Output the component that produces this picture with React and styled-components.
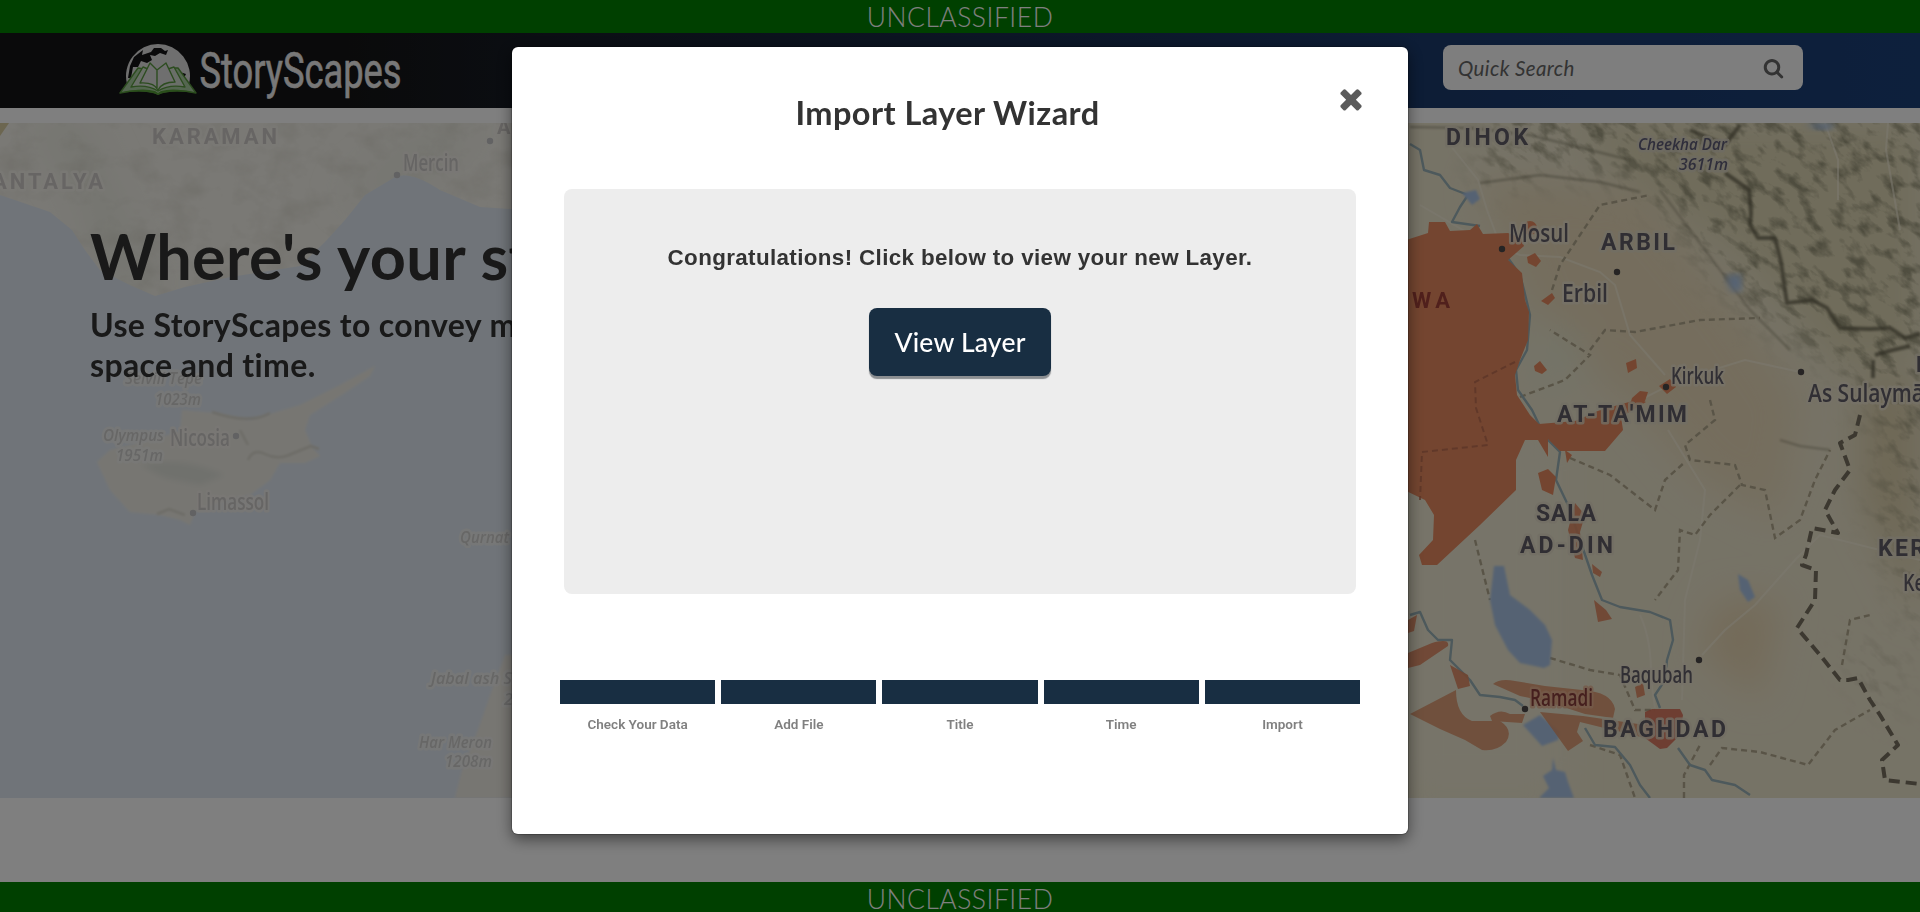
import React from "react";
import styled, { createGlobalStyle } from "styled-components";

const GlobalStyle = createGlobalStyle`
  * { box-sizing: border-box; }
  body { margin: 0; background: #fff; font-family: Lato, sans-serif; color: #333; }
  h1, h2, h3, p, ol { margin: 0; padding: 0; }
`;

const Page = styled.div`
  display: flex;
  flex-direction: column;
  height: 912px;
  overflow: hidden;
`;

const Banner = styled.div`
  flex: none;
  height: ${(p) => p.$height}px;
  background: #008000;
  color: #fff;
  font-size: 26.5px;
  font-weight: 300;
  line-height: 35px;
  letter-spacing: 0.5px;
  text-align: center;
  overflow: hidden;
`;

const Header = styled.header`
  flex: none;
  display: flex;
  align-items: flex-start;
  justify-content: space-between;
  height: 75px;
  margin-bottom: 15px;
  padding: 0 117px 0 118px;
  background: linear-gradient(90deg, #151516 0%, #151516 18%, #1a3a6c 74%, #1b4079 100%);
`;

const LogoArt = styled.svg`
  display: block;
  width: 290px;
  height: 75px;
`;

const SearchBox = styled.div`
  display: flex;
  align-items: center;
  justify-content: space-between;
  width: 360px;
  height: 45px;
  margin-top: 12px;
  padding: 0 19px 0 15px;
  border-radius: 8px;
  background: #fcfcfc;
  color: #666;
  font-size: 20.5px;
  font-style: italic;
  letter-spacing: 0.4px;
`;

const Icon = styled.svg`
  display: block;
  width: ${(p) => p.$size}px;
  height: ${(p) => p.$size}px;
  margin-top: ${(p) => p.$drop || 0}px;
  fill: currentColor;
`;

const Hero = styled.section`
  flex: none;
  display: grid;
  height: 675px;
  margin-bottom: 84px;
  > * { grid-area: 1 / 1; }
`;

const MapArt = styled.svg`
  display: block;
  width: 1920px;
  height: 675px;
`;

const HeroCopy = styled.div`
  z-index: 1;
  width: 640px;
  padding: 95px 0 0 90px;
`;

const HeroTitle = styled.h1`
  font-size: 63px;
  font-weight: 700;
  line-height: 76px;
  letter-spacing: 0.4px;
  white-space: nowrap;
`;

const HeroText = styled.h2`
  margin-top: 11px;
  font-size: 32px;
  font-weight: 700;
  line-height: 40px;
  letter-spacing: 0.36px;
  white-space: nowrap;
`;

const Backdrop = styled.div`
  position: fixed;
  inset: 0;
  z-index: 10;
  display: flex;
  align-items: flex-start;
  justify-content: center;
  padding-top: 47px;
  background: rgba(0, 0, 0, 0.5);
`;

const Modal = styled.div`
  display: flex;
  flex-direction: column;
  width: 896px;
  height: 787px;
  padding: 42px 48px 0;
  border-radius: 6px;
  background: #fff;
  box-shadow: 0 5px 15px rgba(0, 0, 0, 0.5), 0 0 0 1px rgba(0, 0, 0, 0.2);
`;

const ModalHeader = styled.div`
  display: flex;
  height: 100px;
`;

const ModalTitle = styled.h2`
  flex: 1;
  padding: 4px 0 0 0;
  font-size: 32.5px;
  font-weight: 700;
  line-height: 40px;
  letter-spacing: 0.45px;
  text-align: center;
`;

const CloseButton = styled.button`
  width: 32px;
  height: 32px;
  margin: -5px -7px 0 0;
  padding: 0;
  border: 0;
  background: none;
  color: #5b5b5b;
`;

const Panel = styled.div`
  display: flex;
  flex-direction: column;
  align-items: center;
  height: 405px;
  margin: 0 4px;
  padding-top: 54px;
  border-radius: 8px;
  background: #ededed;
`;

const Message = styled.p`
  font-family: "Liberation Sans", Arial, sans-serif;
  font-size: 22.4px;
  font-weight: 700;
  line-height: 30px;
  letter-spacing: 0.36px;
  white-space: nowrap;
`;

const ViewButton = styled.button`
  width: 182px;
  height: 68px;
  margin-top: 35px;
  padding: 0;
  border: 0;
  border-radius: 8px;
  background: #182e42;
  box-shadow: 0 3px 1px #8b8e91;
  color: #fff;
  font: 500 26.5px/67px Lato, sans-serif;
  letter-spacing: 0.2px;
`;

const Steps = styled.ol`
  display: flex;
  gap: 6px;
  margin-top: 86px;
  list-style: none;
`;

const Step = styled.li`
  flex: 1;
  border-top: 24px solid #182e42;
  padding-top: 11px;
  color: #808080;
  font: 600 13.5px/18px Roboto, Arial, sans-serif;
  text-align: center;
`;

const steps = ["Check Your Data", "Add File", "Title", "Time", "Import"];

const placeLabels = [
  // text, x, baseline, width, size, kind
  ["KARAMAN", 152, 143.5, 125, 22, "fadedRegion"],
  ["ANTALYA", -8, 189, 111, 22, "fadedRegion"],
  ["A", 497, 134, 14, 20, "fadedRegion"],
  ["Mercin", 403, 171, 56, 23, "faded"],
  ["Selvili Tepe", 125, 384, 77, 16, "fadedPeak"],
  ["1023m", 155, 405, 46, 17, "fadedPeak"],
  ["Olympus", 103, 441, 61, 17, "fadedPeak"],
  ["1951m", 116, 461, 47, 17, "fadedPeak"],
  ["Nicosia", 170, 446, 60, 23, "faded"],
  ["Limassol", 197, 510, 72, 23, "faded"],
  ["Qurnat", 460, 543, 49, 17, "fadedPeak"],
  ["Jabal ash S", 431, 684, 81, 17, "fadedPeak"],
  ["2", 504, 705, 9, 17, "fadedPeak"],
  ["Har Meron", 419, 748, 73, 17, "fadedPeak"],
  ["1208m", 445, 767, 47, 17, "fadedPeak"],
  ["DIHOK", 1446, 145, 82, 23, "region"],
  ["Cheekha Dar", 1638, 150, 89, 17, "peak"],
  ["3611m", 1679, 170, 49, 17, "peak"],
  ["Mosul", 1509, 242, 60, 26, "city"],
  ["ARBIL", 1601, 250, 74, 23, "region"],
  ["Erbil", 1562, 302, 46, 26, "city"],
  ["WA", 1412, 308, 38, 22, "occupied"],
  ["Kirkuk", 1671, 384, 53, 24, "city"],
  ["As Sulaymā", 1808, 402, 116, 26, "city"],
  ["E", 1916, 372, 14, 22, "region"],
  ["AT-TA'MIM", 1557, 422, 130, 23, "region"],
  ["SALA", 1536, 521, 60, 23, "region"],
  ["AD-DIN", 1520, 553, 93, 23, "region"],
  ["KER", 1878, 556, 47, 23, "region"],
  ["Ke", 1903, 591, 22, 23, "city"],
  ["Baqubah", 1620, 683, 73, 24, "city"],
  ["Ramadi", 1530, 706, 63, 24, "ramadi"],
  ["BAGHDAD", 1603, 737, 123, 23, "region"],
];

const labelStyles = {
  region: { fill: "#605c66", halo: "#e4dcc8", weight: 700, adjust: "spacing" },
  occupied: { fill: "#a04038", halo: "none", weight: 700, adjust: "spacing" },
  city: { fill: "#625e68", halo: "#ece4d0", weight: 600 },
  ramadi: { fill: "#8a3f3c", halo: "#e8b494", weight: 600 },
  peak: { fill: "#5e5c76", halo: "#dcd6c4", weight: 600, italic: true },
  fadedRegion: { fill: "#cfcbc8", halo: "#f4f1ea", weight: 700, adjust: "spacing" },
  faded: { fill: "#cdcac8", halo: "#f2efea", weight: 600 },
  fadedPeak: { fill: "#cfcecd", halo: "#f0f0ee", weight: 600, italic: true },
};

const cities = [
  [490, 141, 1], [397, 175, 1], [236, 436, 1], [193, 513, 1],
  [1502, 249], [1617, 272], [1801, 372], [1666, 387], [1699, 660], [1525, 709],
];

function PlaceLabel({ label: [text, x, y, width, size, kind] }) {
  const s = labelStyles[kind];
  return (
    <text
      x={x}
      y={y}
      textLength={width}
      lengthAdjust={s.adjust || "spacingAndGlyphs"}
      fontFamily={s.adjust ? "Roboto, sans-serif" : "'Open Sans', 'Noto Sans', sans-serif"}
      fontSize={size}
      fontWeight={s.weight}
      fontStyle={s.italic ? "italic" : "normal"}
      fill={s.fill}
      stroke={s.halo}
      strokeOpacity="0.8"
      strokeWidth="5"
      strokeLinejoin="round"
      paintOrder="stroke"
    >
      {text}
    </text>
  );
}

function RegionMap() {
  return (
    <MapArt viewBox="0 123 1920 675" aria-hidden="true">
      <defs>
        <filter id="relief" x="0" y="0" width="100%" height="100%">
          <feTurbulence type="fractalNoise" baseFrequency="0.045 0.085" numOctaves="4" seed="7" />
          <feColorMatrix values="0 0 0 0 0.25  0 0 0 0 0.24  0 0 0 0 0.15  3.6 0 0 0 -1.75" />
        </filter>
        <filter id="softRelief" x="0" y="0" width="100%" height="100%">
          <feTurbulence type="fractalNoise" baseFrequency="0.03 0.04" numOctaves="4" seed="3" />
          <feColorMatrix values="0 0 0 0 0.6  0 0 0 0 0.58  0 0 0 0 0.5  2.4 0 0 0 -1.1" />
        </filter>
        <filter id="blur3"><feGaussianBlur stdDeviation="3" /></filter>
        <filter id="blur1"><feGaussianBlur stdDeviation="1" /></filter>
        <filter id="blur18" x="-30%" y="-30%" width="160%" height="160%"><feGaussianBlur stdDeviation="18" /></filter>
        <mask id="mountains">
          <g filter="url(#blur18)">
            <path fill="#eee" d="M1500 100H1940V330L1900 440 1850 380 1800 340 1740 300 1690 240 1640 180 1560 165 1480 185Z" />
            <path fill="#bbb" d="M1880 410 1940 400V670L1880 530Z" />
            <path fill="#888" d="M1850 640 1890 650 1900 720 1860 680Z" />
          </g>
        </mask>
        <clipPath id="anatolia">
          <path d="M0 123H512V209L480 207 440 190 Q410 170 395 177L365 195 345 220 325 242 300 266 230 277 185 287 155 296 130 285 100 270 85 250 72 230 50 212 0 195Z" />
        </clipPath>
      </defs>

      <rect y="123" width="1400" height="675" fill="#e1e9f2" />
      <g clipPath="url(#anatolia)">
        <rect y="123" width="512" height="180" fill="#f4f2ea" />
        <g filter="url(#blur18)" fill="#e9eadf">
          <path d="M30 123 80 190 100 270 160 300 120 210 80 123Z" />
          <path d="M340 200 430 130 480 123 400 190Z" />
        </g>
        <rect y="123" width="512" height="180" filter="url(#softRelief)" opacity="0.34" />
      </g>
      <path d="M0 123H9L0 136Z" fill="#d8cca0" />

      <path d="M97 462 110 450 180 432 182 410 215 413 250 420 300 405 340 385 375 366 370 376 340 396 310 415 305 430 312 447 320 456 305 463 280 463 270 480 250 495 225 500 195 512 190 525 180 520 160 515 130 512 110 490Z" fill="#efede5" filter="url(#blur1)" />
      <path d="M140 465Q180 455 225 475L200 485 165 478Z" fill="#e0e2da" filter="url(#blur3)" />
      <path d="M212 412Q250 425 270 413M240 430l8 15M248 460q5-12 17-6t24 1 22-9l8 3M157 514l12-5 16 6" fill="none" stroke="#dad8ce" strokeWidth="2.5" filter="url(#blur1)" />
      <path d="M505 655 492 690 478 730 462 770 455 798H520V655Z" fill="#efece4" filter="url(#blur1)" />

      <rect x="1400" y="123" width="520" height="675" fill="#ede6cd" />
      <g filter="url(#blur18)">
        <path d="M1480 180 1640 190 1740 310 1800 400 1780 520 1700 480 1640 410 1540 330Z" fill="#eadbbb" />
        <path d="M1720 600 1780 600 1760 700 1700 650Z" fill="#e8d6b2" />
        <path d="M1400 430H1560V798H1400Z" fill="#eee9d3" />
        <path d="M1540 310 1590 350 1560 400 1530 390Z" fill="#e8e8d0" />
        <path d="M1560 123H1920V360L1840 370 1740 260Z" fill="#e0d8b6" />
        <path d="M1860 380H1920V620L1860 500Z" fill="#ddd0ac" />
      </g>
      <g mask="url(#mountains)">
        <rect x="1100" y="-200" width="1200" height="1300" filter="url(#relief)" transform="rotate(38 1700 400)" opacity="0.8" />
      </g>
      <g fill="none" stroke="#5c5844" strokeWidth="4" strokeLinejoin="round" opacity="0.7" filter="url(#blur1)">
        <path d="M1690 130 1725 145 1740 125M1725 173 1735 180 1749 190 1751 213 1750 225 1758 238 1775 238 1781 262 1785 290 1787 303 1812 300 1827 308 1840 328 1870 329 1890 328 1905 338 1920 334M1875 355 1893 350 1910 346M1873 360v18" />
        <path d="M1410 127 1470 128 1530 135 1590 150 1630 160M1480 183 1540 175 1600 182 1640 192" strokeWidth="2" opacity="0.6" />
        <path d="M1660 190 1690 230 1720 270 1750 310 1790 350M1780 440 1800 446 1830 450" strokeWidth="2" opacity="0.5" />
      </g>

      <g fill="none" stroke="#f7f1dd" strokeWidth="2" opacity="0.6">
        <path d="M1420 205 1480 240 1520 255 1560 257 1600 272 1615 285 1630 335 1665 375M1450 145 1478 180 1487 210 1500 245M1640 400 1680 380 1745 360 1800 372M1668 430 1705 490 1700 540 1685 600 1682 700" />
        <path d="M1640 615Q1652 640 1651 680L1655 708M1702 655 1725 630 1755 605 1795 560 1820 535 1920 560M1825 123 1838 160 1838 200M1888 123 1886 150 1900 230" />
      </g>
      <g fill="none" stroke="#b3a98e" strokeWidth="2.4" strokeDasharray="6 4">
        <path d="M1552 290 1560 265 1580 235 1600 205 1650 195M1520 397 1565 380 1590 355 1550 330M1590 350 1605 330 1635 332 1700 320 1760 318M1710 400 1715 420 1685 445 1690 460 1735 465 1742 485 1765 490 1775 538 1800 520 1815 480 1830 450" />
        <path d="M1570 458 1610 475 1655 510 1665 480 1685 462M1740 485 1710 515 1695 535 1680 530 1678 570 1655 600M1475 540 1490 600M1550 658 1590 670 1620 675 1635 710 1655 710M1710 765 1722 748 1760 752 1808 765 1835 730 1870 710M1590 745 1620 755 1635 798M1684 798 1684 775 1700 745M1842 665 1850 620 1870 615" />
      </g>
      <path d="M1860 415 1855 435 1840 443 1850 470 1835 490 1825 510 1838 533 1812 528 1806 555 1802 565 1816 570 1815 600 1797 628 1820 655 1840 680 1848 680 1858 678 1870 700 1880 715 1898 745 1882 760 1885 780 1920 784" fill="none" stroke="#787160" strokeWidth="4" strokeDasharray="11 6" strokeLinejoin="round" />

      <g fill="none" stroke="#9ab2b8" strokeWidth="2.4" strokeLinejoin="round">
        <path d="M1410 144 1420 150 1424 170 1440 175 1450 188 1468 195 1460 207 1452 222 1480 226M1508 258 1520 275 1524 290 1530 315 1527 350 1516 370 1518 390 1532 410 1545 437 1560 452 1556 480 1568 505 1580 540 1592 575 1602 600 1620 607 1650 612 1670 620 1673 640 1667 660 1665 680 1655 695 1660 708" />
        <path d="M1410 615 1420 612 1428 630 1438 640 1452 640 1450 660 1470 680 1480 695 1500 697 1515 700 1523 706M1585 728 1595 745 1615 747 1630 765 1640 785 1650 798M1678 748 1690 765 1705 770 1712 780 1735 785 1750 795" />
      </g>
      <g fill="#abc5e6" filter="url(#blur1)">
        <path d="M1494 566 1504 566 1510 595 1530 610 1545 625 1552 640 1550 665 1544 668 1520 663 1508 650 1495 625 1490 600Z" />
        <path d="M1539 798 1549 788 1543 776 1552 770 1553 758 1556 770 1565 772 1568 782 1574 798Z" />
        <path d="M1523 725 1540 715 1560 732 1558 740 1542 746Z" />
        <path d="M1462 193 1476 190 1480 199 1472 205Z" />
        <path d="M1725 276 1741 274 1742 291 1732 292Z" filter="url(#blur3)" />
        <path d="M1738 574 1748 580 1755 597 1748 602 1740 590Z" />
        <path d="M1805 123h30l-5 7h-12Z" filter="url(#blur3)" />
      </g>

      <g fill="#e88b60">
        <path d="M1400 242 1428 233 1429 222 1445 222 1450 231 1470 230 1477 224 1483 234 1508 233 1521 238 1524 246 1508 260 1522 273 1525 300 1529 312 1528 340 1520 360 1515 375 1517 395 1530 415 1539 424 1575 421 1600 410 1640 399 1646 402 1621 417 1623 430 1605 451 1560 451 1548 439 1548 457 1538 440 1525 440 1516 460 1516 490 1480 525 1437 565 1422 565 1419 555 1433 540 1434 515 1425 500 1400 488Z" />
        <circle cx="1530" cy="228" r="7" />
        <path d="M1527 257 1535 253 1541 261 1536 267 1528 263ZM1541 301 1552 293 1555 298 1548 305ZM1534 366 1540 361 1547 370 1542 374 1535 371ZM1626 363 1636 359 1637 368 1628 373ZM1659 386 1670 379 1676 387 1667 394ZM1632 398 1640 391 1648 392 1645 401 1630 405ZM1538 473 1548 469 1556 477 1553 495 1542 490ZM1565 450 1572 455 1567 463Z" />
      </g>
      <g fill="none" stroke="#b86a50" strokeWidth="2" strokeDasharray="6 4" opacity="0.8">
        <path d="M1515 362 1475 382 1476 408 1488 445 1460 448 1422 452 1420 500" />
      </g>
      <g fill="#e08a63" opacity="0.9" strokeLinejoin="round">
        <path d="M1575 503 1585 515 1580 532 1583 560 1575 558 1568 530ZM1592 564 1602 572 1600 577 1593 573ZM1594 600 1606 610 1612 619 1598 622ZM1635 687 1643 683 1645 695 1637 698Z" />
        <path d="M1408 653 1432 643Q1450 638 1448 646L1420 665 1408 668ZM1408 620 1417 615 1414 631 1408 633ZM1450 665 1468 675 1470 686 1458 689Z" />
      </g>
      <g fill="#de956c" opacity="0.85">
        <path d="M1410 714 1456 690Q1456 715 1472 721L1500 721Q1514 730 1506 742 1496 752 1482 750L1465 740 1440 729Z" />
        <path d="M1493 684Q1500 678 1515 681L1545 686 1582 690Q1612 692 1615 709L1613 718 1585 714 1548 702 1520 696Z" />
        <path d="M1490 716Q1500 708 1510 714L1525 714 1522 723 1492 721ZM1540 712 1583 716 1645 725V738L1580 722 1577 732 1583 741 1568 751Z" />
      </g>
      <path d="M1645 712 1652 709 1680 709 1683 715 1680 735 1667 748 1660 749 1645 738Z" fill="#d86a51" opacity="0.85" />

      {cities.map(([x, y, faded]) => (
        <circle key={`${x}-${y}`} cx={x} cy={y} r="3.2" fill={faded ? "#c4c4c6" : "#4c4848"} />
      ))}
      {placeLabels.map((label) => (
        <PlaceLabel key={`${label[0]}-${label[1]}`} label={label} />
      ))}
    </MapArt>
  );
}

function Logo() {
  return (
    <LogoArt viewBox="118 33 290 75" role="img" aria-label="StoryScapes">
      <path d="M127 84A32 32 0 1 1 189 84Z" fill="#dedede" />
      <path d="M128 78 130 66 134 57 143 50 142 55 151 52 154 48 161 48 165 51 168 50 166 55 160 53 155 56 150 55 152 60 147 63 141 61 138 67 133 67 131 78ZM180 72 186 74 184 78 177 72Z" fill="#151516" />
      <g stroke="#59983f" strokeWidth="1.4" strokeLinejoin="round">
        <path d="M120 93 138 68 144 69 158 88 172 68 178 68 196 93Q174 88 158 94 142 88 120 93Z" fill="#a9cda0" />
        <path d="M131 87 143 67 148 69 157 87 168 69 174 67 185 87Q169 84 158 91 147 84 131 87Z" fill="#d5dfd2" />
        <path d="M140 83 150 63 157 70 166 63 175 82Q162 82 158 90 154 82 140 83ZM157 70V88" fill="#dedede" />
      </g>
      <path d="M119 93Q142 87 155 91L158 93 161 91Q174 87 197 93 175 90 162 93L158 95 154 93Q141 90 119 93Z" fill="#559c37" />
      <text x="199.5" y="87.5" textLength="202" lengthAdjust="spacingAndGlyphs" fontFamily="Roboto, sans-serif" fontSize="50" fontWeight="400" fill="#f0f0f0" stroke="#f0f0f0" strokeWidth="0.6">
        StoryScapes
      </text>
    </LogoArt>
  );
}

function SearchIcon() {
  return (
    <Icon $size={21} $drop={3} viewBox="0 128 1792 1792">
      <path d="M1216 832q0-185-131.5-316.5t-316.5-131.5-316.5 131.5-131.5 316.5 131.5 316.5 316.5 131.5 316.5-131.5 131.5-316.5zm512 832q0 52-38 90t-90 38q-54 0-90-38l-343-342q-179 124-399 124-143 0-273.5-55.5t-225-150-150-225-55.5-273.5 55.5-273.5 150-225 225-150 273.5-55.5 273.5 55.5 225 150 150 225 55.5 273.5q0 220-124 399l343 343q37 37 37 90z" />
    </Icon>
  );
}

function CloseIcon() {
  return (
    <Icon $size={32} $drop={1} viewBox="0 128 1792 1792">
      <path d="M1490 1322q0 40-28 68l-136 136q-28 28-68 28t-68-28l-294-294-294 294q-28 28-68 28t-68-28l-136-136q-28-28-28-68t28-68l294-294-294-294q-28-28-28-68t28-68l136-136q28-28 68-28t68 28l294 294 294-294q28-28 68-28t68 28l136 136q28 28 28 68t-28 68l-294 294 294 294q28 28 28 68z" />
    </Icon>
  );
}

export default function App() {
  return (
    <>
      <GlobalStyle />
      <Page>
        <Banner $height={33}>UNCLASSIFIED</Banner>
        <Header>
          <Logo />
          <SearchBox>
            Quick Search
            <SearchIcon />
          </SearchBox>
        </Header>
        <Hero>
          <RegionMap />
          <HeroCopy>
            <HeroTitle>Where's your story?</HeroTitle>
            <HeroText>
              Use StoryScapes to convey meaning
              <br />
              space and time.
            </HeroText>
          </HeroCopy>
        </Hero>
        <Banner $height={30}>UNCLASSIFIED</Banner>
      </Page>
      <Backdrop>
        <Modal role="dialog" aria-label="Import Layer Wizard">
          <ModalHeader>
            <ModalTitle>Import Layer Wizard</ModalTitle>
            <CloseButton aria-label="Close">
              <CloseIcon />
            </CloseButton>
          </ModalHeader>
          <Panel>
            <Message>Congratulations! Click below to view your new Layer.</Message>
            <ViewButton>View Layer</ViewButton>
          </Panel>
          <Steps>
            {steps.map((name) => (
              <Step key={name}>{name}</Step>
            ))}
          </Steps>
        </Modal>
      </Backdrop>
    </>
  );
}
